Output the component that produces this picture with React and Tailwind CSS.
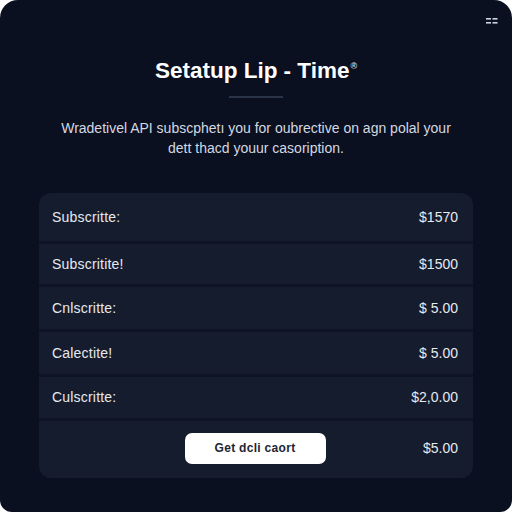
import React from 'react'

const rows = [
    { label: 'Subscritte:', price: '$1570', h: 'h-[48px]' },
    { label: 'Subscritite!', price: '$1500', h: 'h-[40px]' },
    { label: 'Cnlscritte:', price: '$ 5.00', h: 'h-[42px]' },
    { label: 'Calectite!', price: '$ 5.00', h: 'h-[42px]' },
    { label: 'Culscritte:', price: '$2,0.00', h: 'h-[41px]' },
]

const App = () => {
    return (
        <div className="w-[512px] h-[512px] bg-white" style={{ fontFamily: '"Liberation Sans", Arial, sans-serif' }}>
            <div className="h-full bg-[#0a1020] rounded-t-[18px] rounded-b-[12px] flex flex-col px-[39px]">

                {/* Top icon */}
                <div className="flex justify-end pt-[17px] -mr-[25px]">
                    <svg width="12" height="8" viewBox="0 0 12 8">
                        <rect x="0" y="1" width="5" height="1.6" fill="#cbd5e1" />
                        <rect x="0" y="5" width="5" height="1.6" fill="#cbd5e1" />
                        <rect x="6.5" y="1" width="5" height="1.6" fill="#cbd5e1" />
                        <rect x="6.5" y="5" width="5" height="1.6" fill="#cbd5e1" />
                    </svg>
                </div>

                {/* Header */}
                <h1 className="mt-[32px] text-center text-[22.5px] leading-[28px] font-bold text-white">
                    Setatup Lip - Time<sup className="text-[9px] font-bold text-gray-300 ml-[1px] relative -top-[9px]">®</sup>
                </h1>
                <div className="mt-[11px] h-[2px] w-[54px] mx-auto bg-[#2a3448]" />
                <p className="mt-[20px] text-center text-[14px] leading-[20px] text-[#d4d8e0]">
                    Wradetivel API subscphetı you for oubrective on agn polal your<br />
                    dett thacd youur casoription.
                </p>

                {/* Price list */}
                <div className="mt-[35px] rounded-[12px] overflow-hidden bg-[#0e1425] flex flex-col gap-[3px] text-[14px] text-[#e6e9ef]">
                    {rows.map((r, i) => (
                        <div key={i} className={`bg-[#151c2e] flex items-center justify-between pl-[13px] pr-[15px] ${r.h}`}>
                            <span className="tracking-[0.2px]">{r.label}</span>
                            <span>{r.price}</span>
                        </div>
                    ))}
                    <div className="bg-[#151c2e] h-[57px] pb-[3px] grid grid-cols-[1fr_auto_1fr] items-center pl-[13px] pr-[15px]">
                        <span />
                        <button className="w-[141px] h-[31px] bg-white rounded-[7px] text-[12px] font-semibold tracking-[0.3px] text-[#1f2533]">
                            Get dcli caort
                        </button>
                        <span className="text-right">$5.00</span>
                    </div>
                </div>
            </div>
        </div>
    )
}

export default App
